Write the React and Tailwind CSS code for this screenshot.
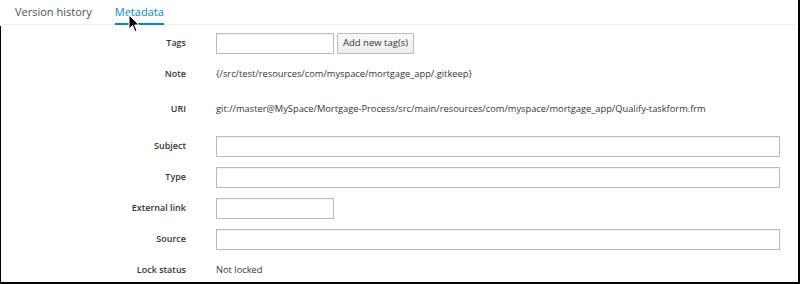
import React from "react";

const Label = ({ children }) => (
  <div className="w-[186px] shrink-0 text-right font-semibold text-[9px] text-[#363636]">{children}</div>
);

const Row = ({ label, children, className = "" }) => (
  <div className={`flex items-center h-[20px] ${className}`}>
    <Label>{label}</Label>
    <div className="ml-[30px] flex items-center text-[9.3px] text-[#363636]">{children}</div>
  </div>
);

const Input = ({ wide }) => (
  <div
    className={`h-[21px] border border-[#bbbbbb] bg-white shadow-[inset_0_1px_1px_rgba(3,3,3,0.06)] ${
      wide ? "w-[564px]" : "w-[118px]"
    }`}
  />
);

export default function App() {
  return (
    <div
      className="relative w-[800px] h-[284px] bg-white overflow-hidden"
      style={{ fontFamily: '"Open Sans", "Liberation Sans", sans-serif' }}
    >
      {/* frame borders */}
      <div className="absolute left-0 top-[26px] bottom-0 w-px bg-black" />
      <div className="absolute right-0 top-0 bottom-0 w-[2px] bg-black" />
      <div className="absolute left-0 right-0 bottom-0 h-[2px] bg-black" />

      {/* tabs */}
      <div className="flex h-[25px] ml-[3px] mr-[5px] border-b border-[#ededed]">
        <div className="pl-[12px] pr-[23px] pt-[4px] text-[11px] text-[#4d5258]">Version history</div>
        <div className="relative pt-[4px] text-[11px] text-[#0088ce]">
          Metadata
          <div className="absolute left-0 right-0 bottom-[-1px] h-[2px] bg-[#0088ce]" />
        </div>
      </div>

      {/* form */}
      <div className="flex flex-col pt-[8px]">
        <Row label="Tags">
          <Input />
          <div className="ml-[3px] h-[21px] px-[5px] flex items-center border border-[#bbbbbb] rounded-[1px] bg-gradient-to-b from-[#fafafa] to-[#ededed] text-[9.5px] text-[#363636]">
            Add new tag(s)
          </div>
        </Row>
        <Row label="Note" className="mt-[11px]">
          {"{/src/test/resources/com/myspace/mortgage_app/.gitkeep}"}
        </Row>
        <Row label="URI" className="mt-[15px]">
          git://master@MySpace/Mortgage-Process/src/main/resources/com/myspace/mortgage_app/Qualify-taskform.frm
        </Row>
        <Row label="Subject" className="mt-[17px]">
          <Input wide />
        </Row>
        <Row label="Type" className="mt-[11px]">
          <Input wide />
        </Row>
        <Row label="External link" className="mt-[11px]">
          <Input />
        </Row>
        <Row label="Source" className="mt-[11px]">
          <Input wide />
        </Row>
        <Row label="Lock status" className="mt-[11px]">
          Not locked
        </Row>
      </div>

      {/* mouse cursor */}
      <svg className="absolute left-[128px] top-[14px]" width="12" height="19" viewBox="0 0 12 19">
        <path d="M1 1 L1 15 L4.5 11.5 L7 17.5 L9 16.7 L6.6 11 L11 11 Z" fill="#000" stroke="#fff" strokeWidth="1" strokeLinejoin="round" />
      </svg>
    </div>
  );
}
